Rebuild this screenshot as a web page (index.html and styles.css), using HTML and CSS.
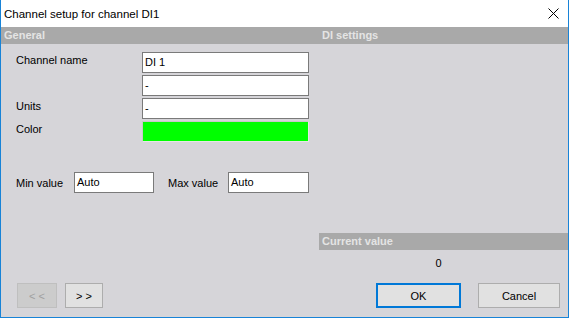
FILE: index.html
```html
<!DOCTYPE html>
<html>
<head>
<meta charset="utf-8">
<link rel="stylesheet" href="styles.css">
</head>
<body>
<div class="window">
  <div class="titlebar">
    <span class="title">Channel setup for channel DI1</span>
    <svg class="close" width="11" height="11" viewBox="0 0 11 11"><path d="M0.5 0.5 L10.5 10.5 M10.5 0.5 L0.5 10.5" stroke="#000" stroke-width="1"/></svg>
  </div>
  <div class="panels">
    <div class="left">
      <div class="hdr">General</div>
      <div class="form">
        <label class="lbl">Channel name</label>
        <div class="inp">DI 1</div>
        <span></span>
        <div class="inp">-</div>
        <label class="lbl">Units</label>
        <div class="inp">-</div>
        <label class="lbl">Color</label>
        <div class="color"></div>
      </div>
      <div class="minmax">
        <label class="lbl min">Min value</label>
        <div class="inp small">Auto</div>
        <label class="lbl max">Max value</label>
        <div class="inp small2">Auto</div>
      </div>
    </div>
    <div class="right">
      <div class="hdr">DI settings</div>
      <div class="cv">
        <div class="hdr">Current value</div>
        <div class="val">0</div>
      </div>
    </div>
  </div>
  <div class="buttons">
    <div class="nav">
      <button class="btn prev" disabled>&lt; &lt;</button>
      <button class="btn next">&gt; &gt;</button>
    </div>
    <div class="actions">
      <button class="btn ok">OK</button>
      <button class="btn cancel">Cancel</button>
    </div>
  </div>
</div>
</body>
</html>
```
FILE: styles.css
```css
* { box-sizing: border-box; }
html, body { margin: 0; padding: 0; }
body {
  width: 569px;
  height: 318px;
  font-family: "Liberation Sans", Arial, sans-serif;
  font-size: 11px;
  color: #000;
}
.window {
  width: 569px;
  height: 318px;
  display: flex;
  flex-direction: column;
  background: #d6d5d9;
  border-left: 1px solid #1883d7;
  border-right: 1px solid #1883d7;
  border-bottom: 1px solid #1883d7;
}
.titlebar {
  height: 27px;
  background: #fff;
  display: flex;
  align-items: center;
  justify-content: space-between;
  padding: 0 9px 0 3px;
  flex: none;
}
.title {
  font-family: "Liberation Sans", Arial, sans-serif;
  font-size: 11.5px;
}
.close { display: block; }
.panels {
  flex: 1;
  display: flex;
}
.left { width: 318px; flex: none; }
.right {
  flex: 1;
  display: flex;
  flex-direction: column;
}
.hdr {
  height: 17px;
  line-height: 17px;
  background: #a9a9a9;
  color: #e4e4e4;
  font-weight: bold;
  font-size: 11px;
  padding-left: 3px;
}
.form {
  display: grid;
  grid-template-columns: 126px 167px;
  row-gap: 2px;
  padding: 8px 0 0 15px;
}
.lbl {
  font-size: 11px;
  padding-top: 2px;
  white-space: nowrap;
}
.inp {
  height: 21px;
  background: #fff;
  border: 1px solid #7a7a7a;
  padding: 3px 0 0 2px;
  font-size: 11px;
  flex: none;
}
.color {
  height: 21px;
  background: #00ff00;
  border: 1px solid #e6e6e6;
  border-top-color: #c8c8c8;
  border-left-color: #c8c8c8;
}
.minmax {
  display: flex;
  align-items: center;
  padding: 30px 0 0 15px;
}
.minmax .lbl { padding-top: 0; flex: none; }
.min { width: 58px; }
.small { width: 80px; }
.max { width: 60px; margin-left: 14px; }
.small2 { width: 81px; }
.cv {
  margin-top: auto;
}
.val {
  height: 26px;
  line-height: 26px;
  text-align: center;
  font-size: 11px;
  padding-right: 10px;
}
.buttons {
  flex: none;
  display: flex;
  justify-content: space-between;
  padding: 7px 8px 9px 16px;
}
.nav, .actions { display: flex; }
.btn {
  height: 25px;
  font-family: "Liberation Sans", Arial, sans-serif;
  font-size: 11px;
  background: #e1e1e1;
  border: 1px solid #adadad;
  color: #000;
  padding: 0;
  margin: 0;
}
.prev {
  width: 40px;
  background: #cccccc;
  border-color: #bfbfbf;
  color: #a0a0a0;
}
.next { width: 38px; margin-left: 8px; }
.ok {
  width: 85px;
  border: 2px solid #0078d7;
}
.cancel { width: 82px; margin-left: 17px; }
```
